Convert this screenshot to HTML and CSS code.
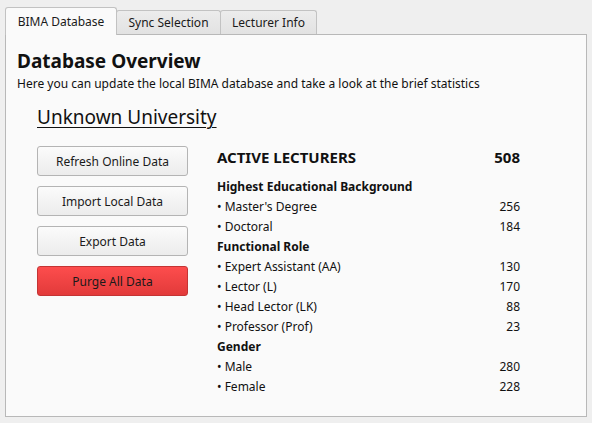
FILE: index.html
```html
<!DOCTYPE html>
<html>
<head>
<meta charset="utf-8">
<link rel="stylesheet" href="styles.css">
</head>
<body>
<div class="window">
  <div class="tabbar">
    <div class="tab active">BIMA Database</div>
    <div class="tab">Sync Selection</div>
    <div class="tab">Lecturer Info</div>
  </div>
  <div class="pane">
    <h1 class="title">Database Overview</h1>
    <p class="subtitle">Here you can update the local BIMA database and take a look at the brief statistics</p>
    <div class="body">
      <h2 class="org">Unknown University</h2>
      <div class="columns">
        <div class="actions">
          <button class="btn">Refresh Online Data</button>
          <button class="btn">Import Local Data</button>
          <button class="btn">Export Data</button>
          <button class="btn danger">Purge All Data</button>
        </div>
        <div class="stats">
          <div class="total"><span>ACTIVE LECTURERS</span><span>508</span></div>
          <div class="group">Highest Educational Background</div>
          <div class="row"><span>• Master's Degree</span><span>256</span></div>
          <div class="row"><span>• Doctoral</span><span>184</span></div>
          <div class="group">Functional Role</div>
          <div class="row"><span>• Expert Assistant (AA)</span><span>130</span></div>
          <div class="row"><span>• Lector (L)</span><span>170</span></div>
          <div class="row"><span>• Head Lector (LK)</span><span>88</span></div>
          <div class="row"><span>• Professor (Prof)</span><span>23</span></div>
          <div class="group">Gender</div>
          <div class="row"><span>• Male</span><span>280</span></div>
          <div class="row"><span>• Female</span><span>228</span></div>
        </div>
      </div>
    </div>
  </div>
</div>
</body>
</html>
```
FILE: styles.css
```css
html, body {
  margin: 0;
  padding: 0;
  background: #efefef;
  font-family: "Noto Sans", "Open Sans", sans-serif;
  color: #111;
}
.window {
  width: 582px;
  padding: 7px 0 0 5px;
}
.tabbar {
  display: flex;
  align-items: flex-end;
  height: 27px;
  position: relative;
  z-index: 1;
}
.tab {
  box-sizing: border-box;
  height: 24px;
  padding: 0;
  border: 1px solid #c2c2c2;
  border-bottom: none;
  border-radius: 3px 3px 0 0;
  background: linear-gradient(#ececec, #e2e2e2);
  font-size: 12px;
  line-height: 23px;
  color: #1a1a1a;
  margin-left: -1px;
  text-align: center;
  white-space: nowrap;
}
.tab:first-child { margin-left: 0; }
.tab.active {
  height: 28px;
  line-height: 27px;
  margin-bottom: -1px;
  background: #fafafa;
  width: 112px;
}
.tab:nth-child(2) { width: 105px; }
.tab:nth-child(3) { width: 97px; }
.pane {
  box-sizing: border-box;
  height: 383px;
  border: 1px solid #b8b8b8;
  background: #fafafa;
  padding: 13px 11px 0 11px;
}
.title {
  margin: 0;
  font-size: 19px;
  font-weight: 700;
  line-height: 27px;
}
.subtitle {
  margin: 0;
  font-size: 12px;
  line-height: 17px;
}
.body {
  padding: 0 0 0 20px;
}
.org {
  margin: 0;
  font-size: 19px;
  font-weight: 400;
  text-decoration: underline;
  text-underline-offset: 3px;
  text-decoration-thickness: 1px;
  line-height: 26px;
  padding-top: 12px;
}
.columns {
  display: flex;
  margin-top: 16px;
  gap: 29px;
}
.actions {
  display: flex;
  flex-direction: column;
  gap: 10px;
  width: 151px;
}
.btn {
  box-sizing: border-box;
  height: 30px;
  border: 1px solid #b4b4b4;
  border-radius: 3px;
  background: linear-gradient(#fbfbfb, #ececec);
  font-family: inherit;
  font-size: 12px;
  color: #1a1a1a;
  padding: 0;
}
.btn.danger {
  background: linear-gradient(#fd4d4d, #e23a3a);
  border-color: #c43434;
}
.stats {
  width: 303px;
}
.total {
  display: flex;
  justify-content: space-between;
  font-size: 15px;
  font-weight: 700;
  line-height: 22px;
  margin-bottom: 9px;
}
.group {
  font-size: 12px;
  font-weight: 700;
  line-height: 20px;
}
.row {
  display: flex;
  justify-content: space-between;
  font-size: 12px;
  line-height: 20px;
}
```
